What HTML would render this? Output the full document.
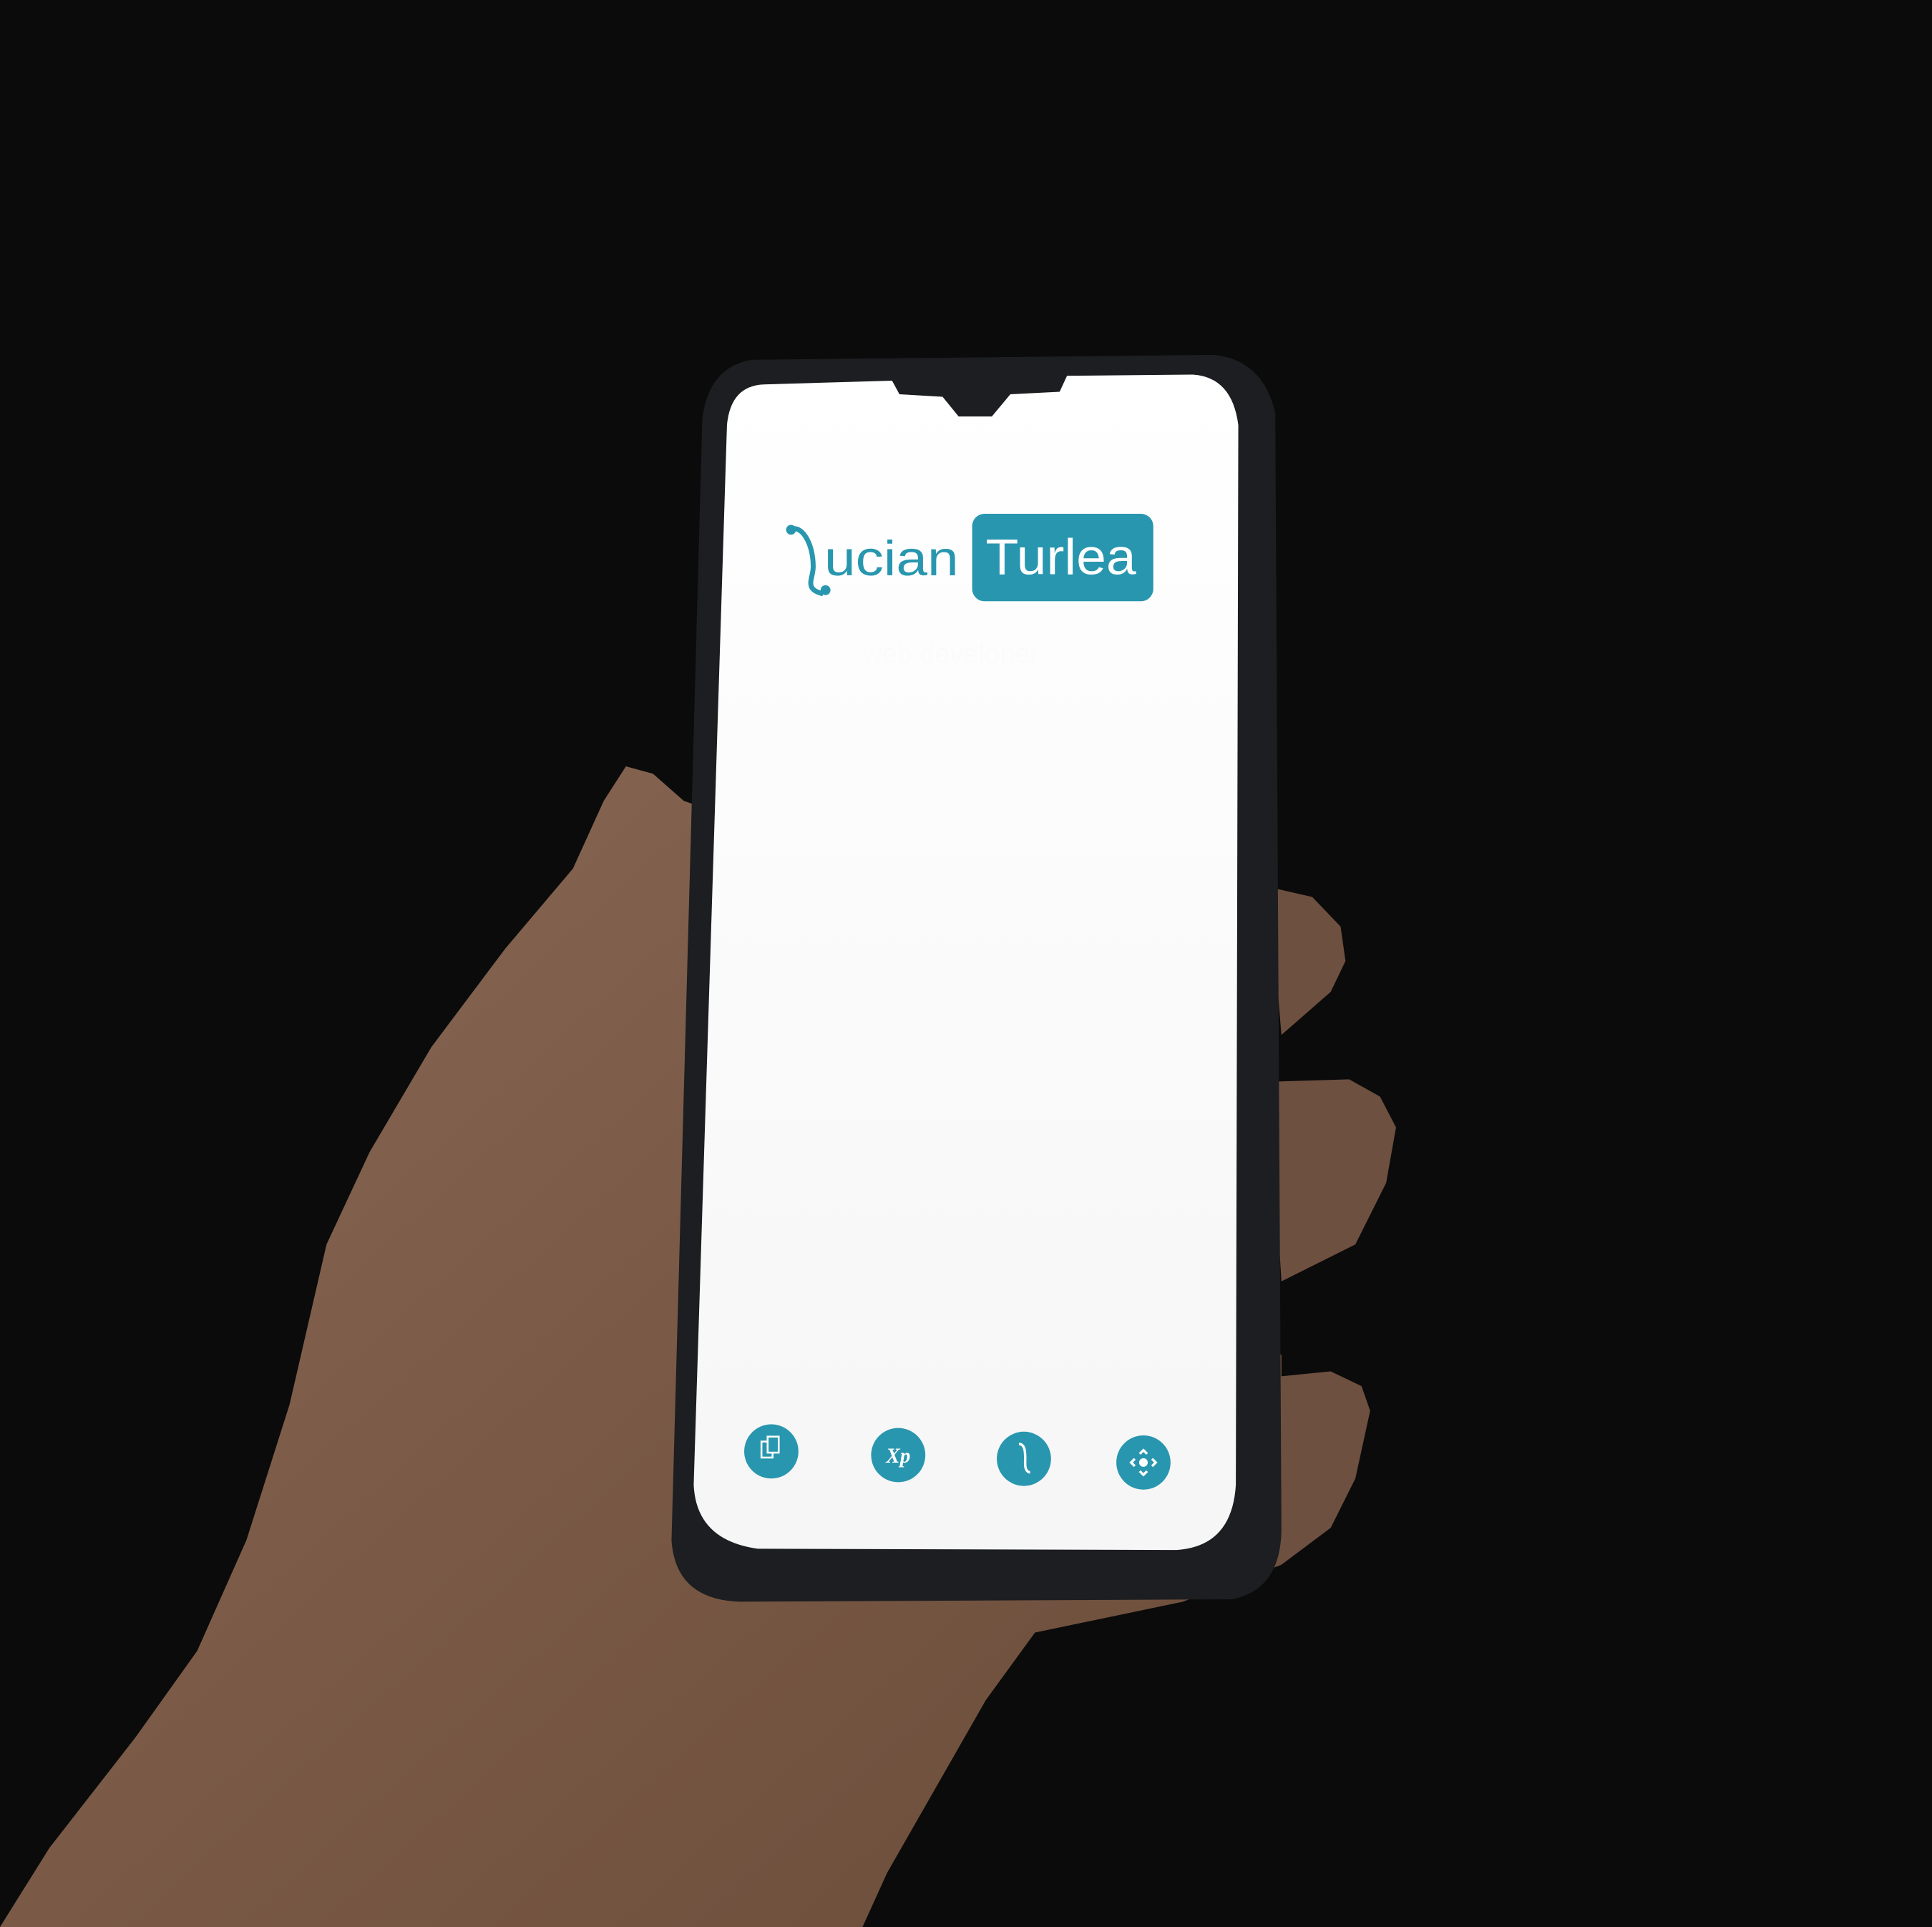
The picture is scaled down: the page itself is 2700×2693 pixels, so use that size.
<!DOCTYPE html>
<html><head><meta charset="utf-8"><style>
html,body{margin:0;padding:0;background:#0b0b0b;width:2700px;height:2693px;overflow:hidden}
svg{display:block}
</style></head><body>
<svg width="2700" height="2693" viewBox="0 0 1568 1564" preserveAspectRatio="none" xmlns="http://www.w3.org/2000/svg">
<defs>
<linearGradient id="scr" x1="0" y1="0" x2="0" y2="1"><stop offset="0" stop-color="#ffffff"/><stop offset="1" stop-color="#f6f6f6"/></linearGradient>
<linearGradient id="skin" x1="0" y1="0" x2="1" y2="1"><stop offset="0" stop-color="#8a6a58"/><stop offset="0.5" stop-color="#7a5a46"/><stop offset="1" stop-color="#6a4c3a"/></linearGradient>
</defs>
<rect width="1568" height="1564" fill="#0b0b0b"/>
<!-- hand -->
<path fill="url(#skin)" d="M0,1564 L40,1500 L110,1410 L160,1340 L200,1250 L235,1140 L265,1010 L300,935 L350,850 L410,770 L465,705 L490,650 L508,622 L530,628 L555,650 L700,700 L1040,1100 L1040,1270 L960,1300 L840,1325 L800,1380 L760,1450 L720,1520 L700,1564 Z"/>
<!-- fingers -->
<path fill="#6e5040" d="M1030,720 L1065,728 L1088,752 L1092,780 L1080,805 L1040,840 Z"/>
<path fill="#6e5040" d="M1030,878 L1095,876 L1120,890 L1133,915 L1125,960 L1100,1010 L1040,1040 Z"/>
<path fill="#6e5040" d="M1030,1118 L1080,1113 L1105,1125 L1112,1145 L1100,1200 L1080,1240 L1040,1270 Z"/>
<!-- phone body -->
<path fill="#1c1e21" d="M610,292 L985,288 Q1025,292 1035,335 L1040,1240 Q1040,1290 1000,1298 L600,1300 Q548,1298 545,1250 L570,340 Q575,298 610,292 Z"/>
<!-- screen -->
<path fill="url(#scr)" d="M620,312 L724,309 L730,320 L765,322 L778,338 L805,338 L820,320 L860,318 L866,305 L968,304 Q1000,306 1005,345 L1003,1205 Q1000,1255 955,1258 L615,1257 Q565,1250 563,1205 L590,345 Q593,313 620,312 Z"/>
<!-- logo -->
<path d="M641,430 C650,425 660,440 660,460 C660,470 652,478 668,482" fill="none" stroke="#2896ae" stroke-width="4"/>
<circle cx="642" cy="430" r="4" fill="#2896ae"/><circle cx="670" cy="479" r="4" fill="#2896ae"/>
<text x="669" y="467" font-family="Liberation Sans, sans-serif" font-size="40" fill="#2896ae" textLength="109" lengthAdjust="spacingAndGlyphs">ucian</text>
<rect x="789" y="417" width="147" height="71" rx="10" fill="#2896ae"/>
<text x="800" y="466" font-family="Liberation Sans, sans-serif" font-size="41" fill="#ffffff" textLength="122" lengthAdjust="spacingAndGlyphs">Turlea</text>
<text x="700" y="538" font-family="Liberation Sans, sans-serif" font-size="22" fill="#fbfbfb">web developer</text>
<!-- icons -->
<circle cx="626" cy="1178" r="22" fill="#2896ae"/>
<rect x="618" y="1170" width="9" height="13" fill="none" stroke="#fff" stroke-width="1.5"/>
<rect x="623" y="1166" width="9" height="13" fill="#2896ae" stroke="#fff" stroke-width="1.5"/>
<circle cx="729" cy="1181" r="22" fill="#2896ae"/>
<text x="729" y="1187" text-anchor="middle" font-family="Liberation Serif, serif" font-style="italic" font-weight="bold" font-size="17" fill="#fff">Xp</text>
<circle cx="831" cy="1184" r="22" fill="#2896ae"/>
<path d="M827,1172 C833,1172 832,1182 832,1188 C832,1193 834,1195 836,1195" fill="none" stroke="#fff" stroke-width="2"/>
<circle cx="928" cy="1187" r="22" fill="#2896ae"/>
<circle cx="928" cy="1187" r="3.5" fill="#fff"/>
<path d="M925,1180 L928,1177 L931,1180 M925,1194 L928,1197 L931,1194 M921,1184 L918,1187 L921,1190 M935,1184 L938,1187 L935,1190" fill="none" stroke="#fff" stroke-width="2"/>
</svg>
</body></html>
